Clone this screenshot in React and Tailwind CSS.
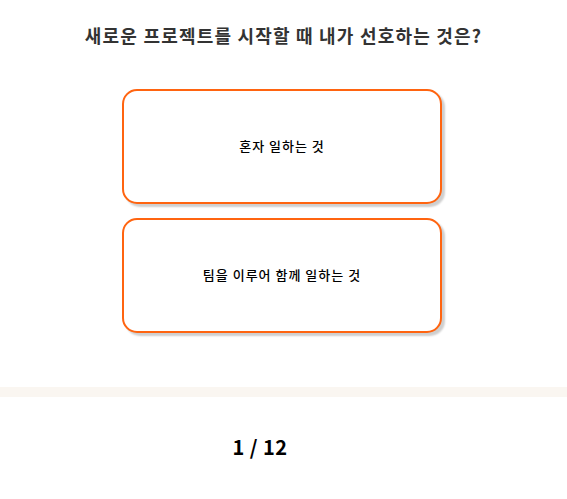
const options = ["혼자 일하는 것", "팀을 이루어 함께 일하는 것"];

export default function App() {
  return (
    <div
      className="w-full min-h-[499px] bg-white flex flex-col"
      style={{ fontFamily: '"Noto Sans CJK KR", "Noto Sans", sans-serif' }}
    >
      <div className="h-[387px] flex flex-col items-center">
        <h1 className="mt-[20px] h-[30px] text-[18px] leading-[30px] font-bold tracking-[1.2px] text-[#333]">
          새로운 프로젝트를 시작할 때 내가 선호하는 것은?
        </h1>
        <div className="mt-[39px] mr-[3px] flex flex-col gap-[14px]">
          {options.map((opt) => (
            <button
              key={opt}
              className="w-[320px] h-[115px] rounded-[15px] border-2 border-[#ff6410] bg-white shadow-[3px_3px_2px_#cfcfcf] text-[13px] font-medium tracking-[1px] text-black flex items-center justify-center pb-[2px]"
            >
              {opt}
            </button>
          ))}
        </div>
      </div>
      <div className="h-[10px] bg-[#faf6f1]" />
      <div className="flex justify-center pt-[36px] pr-[47px]">
        <span className="text-[20px] leading-[28px] font-bold tracking-[0.5px] text-black">1 / 12</span>
      </div>
    </div>
  );
}
